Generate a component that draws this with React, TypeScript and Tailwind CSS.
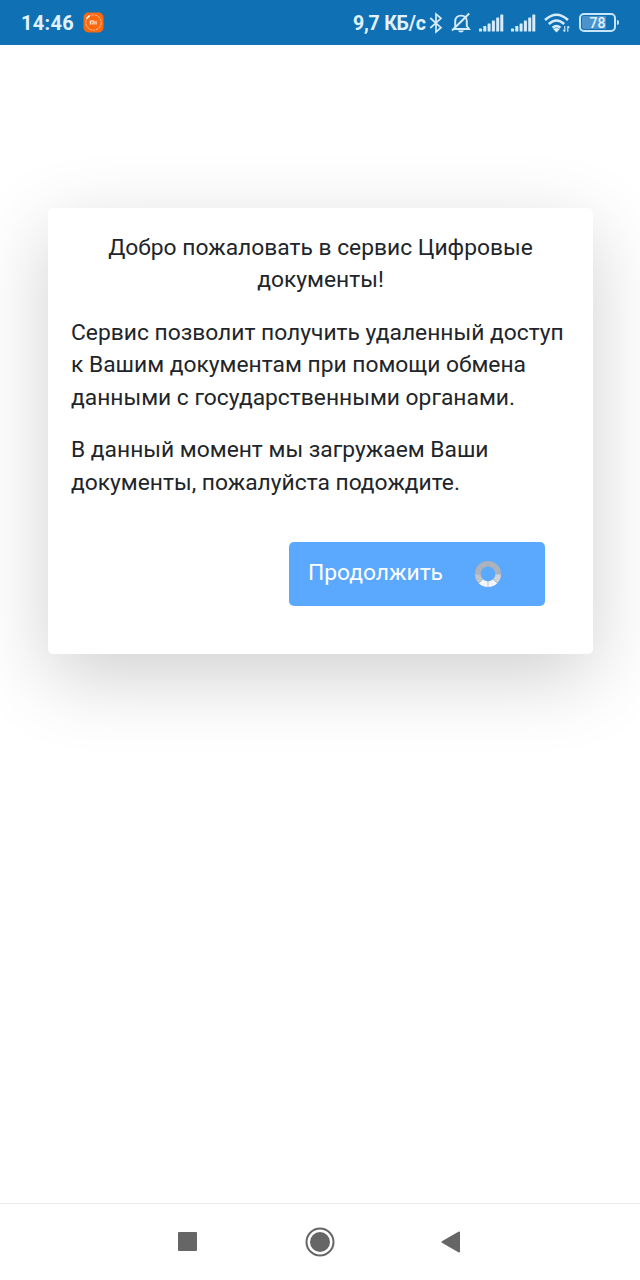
const SignalBars = () => (
  <svg width="25" height="18" viewBox="0 0 25 18" fill="#d6ecfd">
    <rect x="0" y="14.5" width="3" height="3" rx=".6" />
    <rect x="4.3" y="12" width="3" height="5.5" rx=".6" />
    <rect x="8.6" y="9.5" width="3" height="8" rx=".6" />
    <rect x="12.9" y="6.5" width="3" height="11" rx=".6" />
    <rect x="17.2" y="3.5" width="3" height="14" rx=".6" />
    <rect x="21.3" y="0.5" width="3" height="17" rx=".6" />
  </svg>
);

const StatusBar = () => (
  <header className="flex h-[45px] shrink-0 items-center bg-[#1070b4] pl-[21px] text-[#e0f2ff]">
    <span className="w-[62px] pt-px text-[20px] font-bold tracking-[0.3px]">14:46</span>
    <svg width="21" height="21" viewBox="0 0 21 21" fill="none">
      <rect x=".5" y=".5" width="20" height="20" rx="5" fill="#fa6810" />
      <circle cx="10.5" cy="10.5" r="7.7" stroke="#ffc399" strokeWidth="1" strokeDasharray="2.6 .8" />
      <path d="M4 6.2L6 4.2" stroke="#fff" strokeWidth="1.7" strokeLinecap="round" />
      <path d="M7.3 12.5V9h3.7v3.5M9.15 10.5v2M13 9v3.5" stroke="#fff" strokeWidth="1" />
    </svg>
    <span className="ml-[249px] w-[76px] whitespace-nowrap pt-[2px] text-[19.5px] font-bold tracking-[-0.2px]">9,7 КБ/с</span>
    <svg width="14" height="22" viewBox="0 0 14 22" fill="none" stroke="#d6ecfd" strokeWidth="1.7">
      <path d="M1.3 6L12 15.7L7 20V2L12 6.3L1.3 16" />
    </svg>
    <svg width="20" height="22" viewBox="0 0 20 22" fill="none" stroke="#d6ecfd" strokeWidth="1.9" className="ml-[8px]">
      <path d="M4.2 15V9.2C4.2 5.8 6.4 3.6 10 3.6S15.8 5.8 15.8 9.2V14L18 17H2.2M18.2 1.5L1 18.5" />
      <path d="M7 18.5h6q-.8 2-3 2t-3-2z" fill="#d6ecfd" stroke="none" />
    </svg>
    <div className="ml-[8px] flex gap-[7px]">
      <SignalBars />
      <SignalBars />
    </div>
    <svg width="27" height="20" viewBox="0 0 27 20" fill="none" stroke="#d6ecfd" strokeWidth="2.5" className="ml-[8px]">
      <path d="M1 7Q12.5 -3.5 24 7M4.8 11Q12.5 4 20.2 11M8.6 14.8Q12.5 11.5 16.4 14.8" />
      <path d="M9.3 16.2Q12.5 14 15.7 16.2L12.5 19.5z" fill="#d6ecfd" stroke="none" />
      <path d="M20.8 13v5.5M19.2 16.8l1.6 1.8M23.8 18.8v-5.5M25.4 15l-1.6-1.8" strokeWidth="1.1" />
    </svg>
    <div className="ml-[8px] flex h-[19px] w-[37px] items-center justify-center rounded-[5px] border-2 border-[#c7e5fb] bg-[linear-gradient(90deg,#4a93cb_75%,#1070b4_75%)] bg-clip-content p-[1px] text-[14px] font-medium leading-none">
      <span className="pt-px">78</span>
    </div>
    <span className="ml-[1px] h-[5px] w-[2px] rounded-r bg-[#c7e5fb]" />
  </header>
);

const Spinner = () => (
  <svg width="28" height="28" viewBox="0 0 28 28" fill="none" strokeWidth="5.6">
    <circle cx="14" cy="14" r="10.2" stroke="#afb2b8" />
    <path d="M24.2 14A10.2 10.2 0 0 1 21.2 21.2" stroke="#d0d2d6" />
    <path d="M21.2 21.2A10.2 10.2 0 0 1 6.8 21.2" stroke="#f2f5f9" />
    <path d="M6.8 21.2A10.2 10.2 0 0 1 3.8 14" stroke="#c0c3c7" />
    <path d="M14 0v7M14 21v7M0 14h7M21 14h7M4.1 4.1l5 5M18.9 18.9l5 5M4.1 23.9l5-5M18.9 9.1l5-5" stroke="#8eafd4" strokeWidth=".7" />
  </svg>
);

const NavBar = () => (
  <nav className="flex h-[77px] shrink-0 items-center border-t border-[#ececec] bg-white pb-[1px] pl-[178px]">
    <span className="h-[19px] w-[19px] rounded-[1px] bg-[#666]" />
    <svg width="30" height="30" viewBox="0 0 30 30" className="ml-[108px]">
      <circle cx="15" cy="15" r="13.5" fill="none" stroke="#666" strokeWidth="2" />
      <circle cx="15" cy="15" r="10" fill="#666" />
    </svg>
    <svg width="20" height="22" viewBox="0 0 20 22" className="ml-[106px]">
      <path d="M1.3 11L18.2 1.3V20.7z" fill="#666" stroke="#666" strokeWidth="1.6" strokeLinejoin="round" />
    </svg>
  </nav>
);

export default function App() {
  return (
    <div className="flex h-[1280px] w-[640px] flex-col overflow-hidden bg-white font-['Roboto',sans-serif]">
      <StatusBar />
      <main className="flex-1 pl-[48px] pt-[163px]">
        <section className="h-[446px] w-[545px] rounded-[5px] bg-white px-[23px] pt-[23.6px] text-[22.8px] leading-[32.7px] text-[#212529] shadow-[0_23px_78px_rgba(0,0,0,0.19)]">
          <p className="mb-[19.5px] text-center">
            Добро пожаловать в сервис Цифровые
            <br />
            документы!
          </p>
          <p className="mb-[19.5px] whitespace-nowrap">
            Сервис позволит получить удаленный доступ
            <br />
            к Вашим документам при помощи обмена
            <br />
            данными с государственными органами.
          </p>
          <p className="whitespace-nowrap">
            В данный момент мы загружаем Ваши
            <br />
            документы, пожалуйста подождите.
          </p>
          <button className="ml-[218px] mt-[42.4px] flex h-[64px] w-[256px] items-center rounded-[5px] bg-[#5ba8ff] pl-[19px] text-white">
            <span className="w-[166px] pb-[2px] text-left">Продолжить</span>
            <Spinner />
          </button>
        </section>
      </main>
      <NavBar />
    </div>
  );
}
